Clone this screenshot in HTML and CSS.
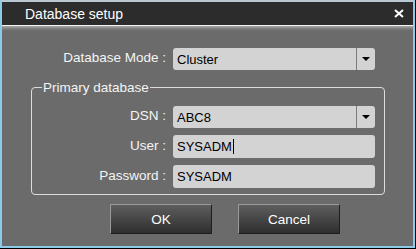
FILE: index.html
```html
<!DOCTYPE html>
<html>
<head>
<meta charset="utf-8">
<link rel="stylesheet" href="styles.css">
</head>
<body>
<div class="window">
  <div class="titlebar">
    <span class="title">Database setup</span>
    <svg class="close" width="10" height="9" viewBox="0 0 10 9"><path d="M1 1 L9 8 M9 1 L1 8" stroke="#fff" stroke-width="2"/></svg>
  </div>
  <div class="content">
    <div class="row mode-row">
      <label class="label label-mode">Database Mode :</label>
      <div class="field combo"><span class="value">Cluster</span><span class="drop"><span class="arrow"></span></span></div>
    </div>
    <fieldset class="group">
      <legend class="legend">Primary database</legend>
      <div class="row r-dsn">
        <label class="label label-in">DSN :</label>
        <div class="field combo"><span class="value">ABC8</span><span class="drop"><span class="arrow"></span></span></div>
      </div>
      <div class="row r-user">
        <label class="label label-in">User :</label>
        <div class="field input"><span class="value">SYSADM</span><span class="caret"></span></div>
      </div>
      <div class="row r-pass">
        <label class="label label-in">Password :</label>
        <div class="field input"><span class="value">SYSADM</span></div>
      </div>
    </fieldset>
    <div class="buttons">
      <button class="btn">OK</button>
      <button class="btn">Cancel</button>
    </div>
  </div>
</div>
</body>
</html>
```

FILE: styles.css
```css
html, body {
  margin: 0;
  padding: 0;
  background: #000;
  width: 416px;
  height: 249px;
  overflow: hidden;
}
body {
  font-family: "Liberation Sans", Arial, sans-serif;
  font-size: 13px;
}
.window {
  box-sizing: border-box;
  width: 415px;
  height: 248px;
  border: 2px solid #8ccbe8;
  border-top-color: #b9c8d0;
  background: #6b6b6b;
  display: flex;
  flex-direction: column;
}
.titlebar {
  height: 23px;
  background: #2c2c2c;
  border-bottom: 1px solid #f2f2f2;
  display: flex;
  align-items: center;
  padding-left: 23px;
  padding-right: 9px;
  color: #fff;
}
.title {
  font-size: 14px;
  flex: 1;
}
.close {
  display: block;
}
.content {
  flex: 1;
  background: linear-gradient(#a8a8a8 0px, #7a7a7a 3px, #6b6b6b 5px, #6b6b6b 100%);
  padding-top: 22px;
}
.row {
  display: flex;
  align-items: center;
  gap: 7px;
}
.label {
  color: #f4f4f4;
  text-align: right;
  font-size: 13.5px;
  line-height: 15px;
  padding-bottom: 3px;
}
.label-mode { width: 164px; }
.label-in { width: 134px; }
.field {
  box-sizing: border-box;
  width: 202px;
  height: 22px;
  background: #d3d3d3;
  border-radius: 3px;
  display: flex;
  align-items: center;
  color: #000;
  position: relative;
}
.value {
  padding-left: 4px;
  flex: 1;
}
.drop {
  width: 18px;
  height: 22px;
  border-left: 1px solid #7a7a7a;
  display: flex;
  align-items: center;
  justify-content: center;
}
.arrow {
  width: 0;
  height: 0;
  border-left: 4px solid transparent;
  border-right: 4px solid transparent;
  border-top: 4px solid #000;
}
.input { height: 23px; }
.input .value { flex: none; }
.caret {
  width: 1px;
  height: 15px;
  background: #000;
  margin-left: 1px;
}
.group {
  box-sizing: border-box;
  margin: 10px 0 0 29px;
  width: 354px;
  padding: 11px 0 6px 0;
  border: 1px solid #dcdcdc;
  border-radius: 4px;
}
.legend {
  color: #f4f4f4;
  font-size: 13.5px;
  line-height: 15px;
  padding: 0 1px;
  margin-left: 10px;
}
.r-dsn { margin-bottom: 7px; }
.r-user { margin-bottom: 7px; }
.buttons {
  display: flex;
  gap: 26px;
  padding-left: 108px;
  margin-top: 9px;
}
.btn {
  box-sizing: border-box;
  width: 102px;
  height: 30px;
  font-family: "Liberation Sans", Arial, sans-serif;
  font-size: 13.5px;
  color: #fff;
  background: linear-gradient(#5e5e5e, #2e2e2e);
  border: 1px solid;
  border-color: #9a9a9a #1e1e1e #1e1e1e #9a9a9a;
  border-radius: 1px;
  padding: 0;
}
```
